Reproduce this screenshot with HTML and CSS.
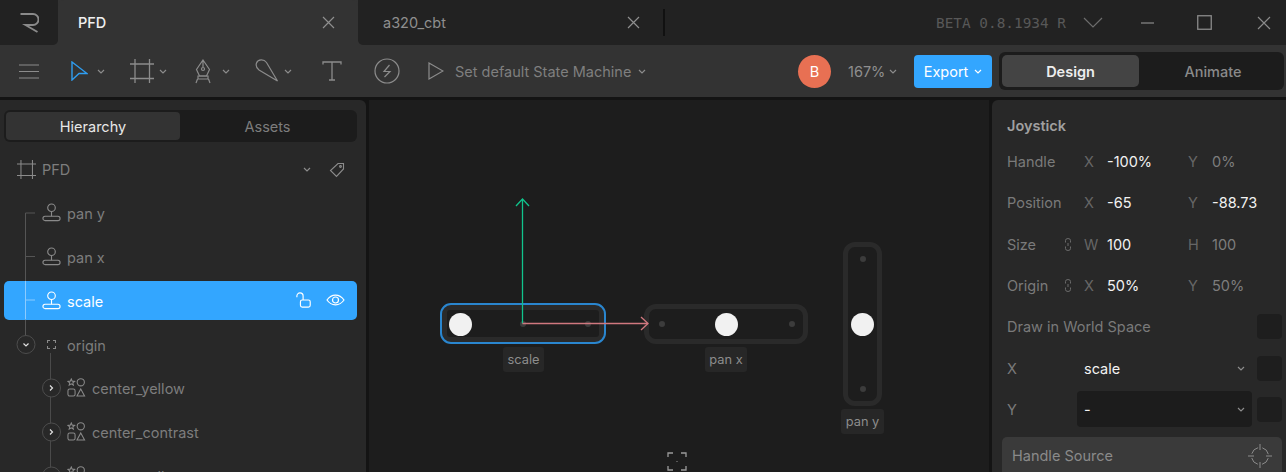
FILE: index.html
```html
<!DOCTYPE html>
<html>
<head>
  <title>PFD - Rive</title>
  <meta charset="UTF-8">
  <link rel="stylesheet" href="styles.css">
</head>
<body>
<svg class="defs" width="0" height="0">
  <symbol id="chev" viewBox="0 0 8 5"><path d="M1 1l3 3 3-3" fill="none" stroke="currentColor" stroke-width="1.2"/></symbol>
  <symbol id="frame" viewBox="0 0 24 24" fill="none" stroke="currentColor" stroke-width="1.3"><path d="M0 5h24M0 19.500h24M5 0v24M19.500 0v24"/></symbol>
  <symbol id="stick" viewBox="0 0 20 20" fill="none" stroke="currentColor" stroke-width="1.2"><circle cx="10" cy="5" r="4"/><path d="M10 9v5"/><rect x="1" y="14" width="18" height="4.500" rx="2.200"/></symbol>
  <symbol id="shapes" viewBox="0 0 20 20" fill="none" stroke="currentColor" stroke-width="1.1"><path d="M4.500 1l1 2.300 2.500.2-1.900 1.600.6 2.400-2.200-1.300-2.200 1.300.6-2.400L1 3.500l2.500-.2z"/><circle cx="14.500" cy="4.500" r="3.800"/><rect x="1" y="11.500" width="7.500" height="7.500" rx="1.800"/><path d="M14.500 11.500l4 7.500h-8z"/></symbol>
</svg>

<header class="titlebar">
  <div class="logo">
    <svg width="19" height="20" viewBox="0 0 19 20" fill="none" stroke="#8a8a8a" stroke-width="1.900"><path d="M.5 1h12.500a5.500 5.500 0 0 1 0 11H5.500l12 7"/></svg>
  </div>
  <div class="tab tab-active">
    <span>PFD</span>
    <svg class="tab-x" width="13" height="13" viewBox="0 0 13 13"><path d="M1 1l11 11M12 1L1 12" stroke="#8f8f8f" stroke-width="1.200"/></svg>
  </div>
  <div class="title-rest">
    <div class="tab">
      <span>a320_cbt</span>
      <svg class="tab-x" width="13" height="13" viewBox="0 0 13 13"><path d="M1 1l11 11M12 1L1 12" stroke="#8f8f8f" stroke-width="1.200"/></svg>
    </div>
    <div class="tab-sep"></div>
    <div class="version">BETA 0.8.1934 R</div>
    <svg class="ver-chev" width="20" height="12" viewBox="0 0 20 12"><path d="M1 1l9 9 9-9" fill="none" stroke="#6d6d6d" stroke-width="1.200"/></svg>
    <svg class="win-min" width="13" height="2" viewBox="0 0 13 2"><path d="M0 1h13" stroke="#8a8a8a" stroke-width="1.200"/></svg>
    <svg class="win-max" width="15" height="15" viewBox="0 0 15 15"><rect x=".75" y=".75" width="13.500" height="13.500" fill="none" stroke="#8a8a8a" stroke-width="1.300"/></svg>
    <svg class="win-close" width="14" height="14" viewBox="0 0 14 14"><path d="M1 1l12 12M13 1L1 13" stroke="#8a8a8a" stroke-width="1.200"/></svg>
  </div>
</header>

<div class="toolbar">
  <svg class="t-menu" width="20" height="15" viewBox="0 0 20 15"><path d="M0 1h20M0 7.500h20M0 14h20" stroke="#8c8c8c" stroke-width="1.200"/></svg>
  <svg class="t-arrow" width="17" height="20" viewBox="0 0 17 20"><path d="M1 1l15 11.500H8L1 19z" fill="none" stroke="#2f9df0" stroke-width="1.400"/></svg>
  <svg class="t-chev c1"><use href="#chev"/></svg>
  <svg class="t-crop" width="24" height="24" color="#8c8c8c"><use href="#frame"/></svg>
  <svg class="t-chev c2"><use href="#chev"/></svg>
  <svg class="t-pen" width="18" height="25" viewBox="0 0 18 25" fill="none" stroke="#8c8c8c" stroke-width="1.200"><path d="M9 1l6.500 9.500-3 6.500h-7l-3-6.500zM9 1v7"/><circle cx="9" cy="10" r="1.500"/><path d="M4 17h10v3H4zM3.500 20L2 24M14.500 20l1.500 4"/></svg>
  <svg class="t-chev c3"><use href="#chev"/></svg>
  <svg class="t-knife" width="24" height="24" viewBox="0 0 24 24" fill="none" stroke="#8c8c8c" stroke-width="1.200"><path d="M22.500 22L11.500 3.500C9 0 3 0 1.500 4 .5 7 2 9.500 4 11z"/></svg>
  <svg class="t-chev c4"><use href="#chev"/></svg>
  <svg class="t-text" width="20" height="20" viewBox="0 0 20 20" fill="none" stroke="#8c8c8c" stroke-width="1.300"><path d="M1 3.500V1h18v2.500M10 1v18M7 19h6"/></svg>
  <svg class="t-bolt" width="26" height="26" viewBox="0 0 26 26" fill="none" stroke="#8c8c8c" stroke-width="1.200"><circle cx="13" cy="13" r="12"/><path d="M15.500 7L10 13.500h6L10.500 19"/></svg>
  <svg class="t-play" width="16" height="18" viewBox="0 0 16 18"><path d="M1 1l14 8-14 8z" fill="none" stroke="#8c8c8c" stroke-width="1.200"/></svg>
  <span class="t-state">Set default State Machine</span>
  <svg class="t-chev c5"><use href="#chev"/></svg>
  <div class="avatar">B</div>
  <span class="t-zoom">167%</span>
  <svg class="t-chev c6"><use href="#chev"/></svg>
  <div class="export">Export <svg class="t-chev c7"><use href="#chev"/></svg></div>
  <div class="mode">
    <div class="mode-btn mode-on">Design</div>
    <div class="mode-btn">Animate</div>
  </div>
</div>

<main class="workspace">
  <aside class="left">
    <div class="seg">
      <div class="seg-btn seg-on">Hierarchy</div>
      <div class="seg-btn">Assets</div>
    </div>
    <div class="artboard">
      <svg class="ab-icon" width="19" height="19" color="#8c8c8c"><use href="#frame"/></svg>
      <span>PFD</span>
      <svg class="ab-chev t-chev"><use href="#chev"/></svg>
      <svg class="ab-tag" width="16" height="16" viewBox="0 0 16 16" fill="none" stroke="#8c8c8c" stroke-width="1.100"><path d="M9 1.500h5.500V7L7.500 14.500 1.500 8.500z"/><circle cx="11.500" cy="4.500" r=".9"/></svg>
    </div>
    <div class="tree">
      <div class="row d1"><svg class="r-icon" color="#8a8a8a"><use href="#stick"/></svg><span>pan y</span></div>
      <div class="row d1"><svg class="r-icon" color="#8a8a8a"><use href="#stick"/></svg><span>pan x</span></div>
      <div class="row d1 row-sel">
        <svg class="r-icon" color="#fff"><use href="#stick"/></svg><span>scale</span>
        <svg class="lock" width="16" height="16" viewBox="0 0 18 18" fill="none" stroke="#fff" stroke-width="1.300"><path d="M1 6V4.500a3.500 3.500 0 0 1 7 0V9"/><rect x="5" y="9" width="11" height="8" rx="2"/></svg>
        <svg class="eye" width="19" height="12" viewBox="0 0 19 12" fill="none" stroke="#fff" stroke-width="1.200"><path d="M1 6c4.500-6.500 12.500-6.500 17 0-4.500 6.500-12.500 6.500-17 0z"/><circle cx="9.500" cy="6" r="3"/></svg>
      </div>
      <div class="row d1">
        <svg class="r-target" width="9" height="9" viewBox="0 0 9 9" fill="none" stroke="#8a8a8a" stroke-width="1.100"><path d="M.5 3V.5H3M6 .5h2.500V3M8.500 6v2.500H6M3 8.500H.5V6"/></svg><span>origin</span>
      </div>
      <div class="row d2"><svg class="r-icon" color="#8a8a8a"><use href="#shapes"/></svg><span>center_yellow</span></div>
      <div class="row d2"><svg class="r-icon" color="#8a8a8a"><use href="#shapes"/></svg><span>center_contrast</span></div>
      <div class="row d2"><svg class="r-icon" color="#8a8a8a"><use href="#shapes"/></svg><span>center_yellow</span></div>
      <svg class="guides" width="120" height="340" viewBox="0 0 120 340" fill="none" stroke-width="1">
        <path d="M25.500 63V131M25.500 169.500V186M25.500 63H35M25.500 106.500H35" stroke="#555"/>
        <path d="M25.500 131V169.500M25.500 150H35" stroke="#8ccbff"/>
        <path d="M50.500 203V330" stroke="#4a4a4a"/>
        <g fill="#282828" stroke="#4d4d4d"><circle cx="26" cy="194.500" r="9"/><circle cx="51.500" cy="238" r="9"/><circle cx="51.500" cy="282" r="9"/><circle cx="51.500" cy="326" r="9"/></g>
        <g stroke="#e0e0e0" stroke-width="1.200"><path d="M23.500 193.500l2.500 2.500 2.500-2.500M50 235.500l2.500 2.500-2.500 2.500M50 279.500l2.500 2.500-2.500 2.500M50 323.500l2.500 2.500-2.500 2.500"/></g>
      </svg>
    </div>
  </aside>

  <section class="stage">
    <div class="stick-box scale-box"><i class="dot dot-a"></i><i class="dot dot-b"></i><b class="knob"></b></div>
    <div class="selection"></div>
    <div class="tag tag-scale">scale</div>

    <div class="stick-box panx-box"><i class="dot dot-a"></i><i class="dot dot-b"></i><b class="knob"></b></div>
    <div class="tag tag-panx">pan x</div>

    <div class="stick-box pany-box"><i class="dot dot-a"></i><i class="dot dot-b"></i><b class="knob"></b></div>
    <div class="tag tag-pany">pan y</div>

    <svg class="axes" width="290" height="240" viewBox="0 0 290 240" fill="none" stroke-width="1.300">
      <path d="M153.500 100V223.500" stroke="#10c48c"/>
      <path d="M147 106l6.500-7 6.500 7" stroke="#10c48c"/>
      <path d="M153.500 223.500H279" stroke="#d0787f"/>
      <path d="M272 217l7 6.500-7 6.500" stroke="#d0787f"/>
    </svg>
    <svg class="focus" width="20" height="19" viewBox="0 0 20 19" fill="none" stroke="#9a9a9a" stroke-width="1.300"><path d="M1 5V1h5M14 1h5v4M19 14v4h-5M6 18H1v-4"/><path d="M10 9v1" stroke="#777"/></svg>
  </section>

  <aside class="right">
    <h3 class="insp-title">Joystick</h3>
    <div class="insp">
      <div class="prop"><span class="p-label">Handle</span><span class="p-axis">X</span><span class="p-val on">-100%</span><span class="p-axis">Y</span><span class="p-val">0%</span></div>
      <div class="prop"><span class="p-label">Position</span><span class="p-axis">X</span><span class="p-val on">-65</span><span class="p-axis">Y</span><span class="p-val on">-88.73</span></div>
      <div class="prop">
        <span class="p-label">Size<svg class="link" width="6" height="13" viewBox="0 0 6 13" fill="none" stroke="#6a6a6a" stroke-width="1"><path d="M.5 4.500V2.500a2.500 2 0 0 1 5 0v2M.5 8.500v2a2.500 2 0 0 0 5 0v-2M3 5v3"/></svg></span>
        <span class="p-axis">W</span><span class="p-val on">100</span><span class="p-axis">H</span><span class="p-val">100</span>
      </div>
      <div class="prop">
        <span class="p-label">Origin<svg class="link" width="6" height="13" viewBox="0 0 6 13" fill="none" stroke="#6a6a6a" stroke-width="1"><path d="M.5 4.500V2.500a2.500 2 0 0 1 5 0v2M.5 8.500v2a2.500 2 0 0 0 5 0v-2M3 5v3"/></svg></span>
        <span class="p-axis">X</span><span class="p-val on">50%</span><span class="p-axis">Y</span><span class="p-val">50%</span>
      </div>
      <div class="prop-wide"><span class="p-label">Draw in World Space</span><div class="key"></div></div>
      <div class="prop-wide"><span class="p-label p-short">X</span><div class="select"><span>scale</span><svg class="t-chev"><use href="#chev"/></svg></div><div class="key"></div></div>
      <div class="prop-wide"><span class="p-label p-short">Y</span><div class="select select-on"><span>-</span><svg class="t-chev"><use href="#chev"/></svg></div><div class="key"></div></div>
    </div>
    <div class="source">
      <span>Handle Source</span>
      <svg width="24" height="24" viewBox="0 0 24 24" fill="none" stroke="#8c8c8c" stroke-width="1"><circle cx="12" cy="12" r="8.500" stroke-dasharray="9 4.350" stroke-dashoffset="11.200"/><path d="M12 0v6M12 18v6M0 12h6M18 12h6"/></svg>
    </div>
  </aside>
</main>
</body>
</html>
```

FILE: styles.css
```css
* { box-sizing: border-box; }
html, body { height: 100%; }
body {
  margin: 0; height: 472px; overflow: hidden;
  font-family: Inter, "Liberation Sans", sans-serif; font-size: 14.500px;
  background: #141414; color: #8a8a8a;
  display: flex; flex-direction: column;
}
.defs { position: absolute; }
svg { display: block; flex: none; }

/* title bar */
.titlebar { height: 45px; display: flex; background: #333; flex: none; }
.logo { width: 58px; background: #222; border-bottom-right-radius: 5px; padding: 13px 0 0 20px; }
.tab { width: 300px; display: flex; align-items: center; padding-left: 25px; color: #8f8f8f; }
.tab-active { background: #333; color: #f0f0f0; padding-left: 20px; border-radius: 6px 6px 0 0; font-weight: 500; }
.tab-x { margin-left: auto; margin-right: 23px; }
.title-rest { flex: 1; display: flex; align-items: center; background: #222; border-bottom-left-radius: 5px; }
.title-rest .tab { width: 297px; height: 100%; }
.title-rest .tab-x { margin-right: 15px; }
.tab-sep { width: 2px; height: 27px; background: #111; margin-left: 8px; }
.version { margin-left: 271px; font-family: "DejaVu Sans Mono", monospace; font-size: 14.400px; color: #585858; white-space: nowrap; }
.ver-chev { margin-left: 17px; }
.win-min { margin-left: 38px; }
.win-max { margin-left: 43px; }
.win-close { margin-left: 45px; }

/* toolbar */
.toolbar { height: 52px; flex: none; background: #333; display: flex; align-items: center; padding-left: 19px; position: relative; }
.t-chev { width: 8px; height: 5px; color: #8c8c8c; }
.t-arrow { margin-left: 32px; }
.c1 { margin-left: 9px; }
.t-crop { margin-left: 25px; }
.c2 { margin-left: 5px; }
.t-pen { margin-left: 27px; }
.c3 { margin-left: 10px; }
.t-knife { margin-left: 25px; }
.c4 { margin-left: 5px; }
.t-text { margin-left: 30px; }
.t-bolt { margin-left: 32px; }
.t-play { margin-left: 28px; }
.t-state { margin-left: 11px; color: #7f7f7f; white-space: nowrap; width: 178px; }
.c5 { margin-left: 5px; }
.avatar { width: 33px; height: 33px; border-radius: 50%; background: #e87053; color: #fff; display: flex; align-items: center; justify-content: center; margin-left: 152px; }
.t-zoom { margin-left: 17px; width: 37px; color: #8f8f8f; }
.c6 { margin-left: 4px; }
.export { width: 78px; height: 33px; margin-left: 17px; background: #33a6ff; color: #fff; border-radius: 4px; display: flex; align-items: center; justify-content: center; gap: 6px; }
.c7 { color: #fff; }
.mode { width: 285px; height: 38px; margin-left: 7px; background: #1c1c1c; border-radius: 6px; padding: 3px; display: flex; }
.mode-btn { flex: 1; display: flex; align-items: center; justify-content: center; font-weight: 500; color: #8a8a8a; border-radius: 5px; padding-left: 6px; }
.mode-btn:first-child { flex: none; width: 137px; padding-left: 0; }
.mode-on { background: #444; color: #eee; font-weight: 600; }

/* panels */
.workspace { flex: 1; min-height: 0; display: flex; margin-top: 3px; gap: 3px; }
.left { width: 366px; background: #282828; border-top-right-radius: 6px; padding: 10px 9px 0 4px; flex: none; }
.stage { flex: none; width: 620px; background: #1d1d1d; position: relative; overflow: hidden; }
.right { flex: 1; background: #282828; border-top-left-radius: 6px; padding: 17px 4px 0 10px; overflow: hidden; }

/* left panel */
.seg { height: 32px; background: #1c1c1c; border-radius: 6px; padding: 2px; display: flex; }
.seg-btn { flex: 1; display: flex; align-items: center; justify-content: center; color: #7d7d7d; border-radius: 4px; }
.seg-on { flex: none; width: 174px; background: #333; color: #e8e8e8; }
.artboard { height: 39px; margin-top: 8px; display: flex; align-items: center; padding-left: 13px; color: #7d7d7d; }
.artboard span { margin-left: 6px; }
.ab-chev { margin-left: auto; }
.ab-tag { margin: 0 12px 0 18px; }
.tree { display: flex; flex-direction: column; gap: 5px; margin-top: 4.600px; position: relative; }
.row { height: 38.700px; flex: none; display: flex; align-items: center; border-radius: 5px; color: #7d7d7d; }
.row span { padding-top: 2px; }
.d1 { padding-left: 38px; }
.d2 { padding-left: 63px; }
.r-icon { width: 19px; height: 19px; margin-right: 6px; }
.r-target { margin: 0 11px 0 5px; }
.row-sel { background: #33a6ff; color: #fff; }
.lock { margin-left: auto; }
.eye { margin: 0 12px 0 14px; }
.guides { position: absolute; left: -4px; top: -43.600px; pointer-events: none; }

/* canvas */
.stick-box, .selection, .tag, .axes, .focus { position: absolute; }
.stick-box { border: 5px solid #2a2a2a; border-radius: 12px; }
.selection { left: 71px; top: 203px; width: 166px; height: 41px; border: 2px solid #2a86cf; border-radius: 11px; }
.knob { position: absolute; width: 23px; height: 23px; border-radius: 50%; background: #f1f1f1; }
.dot { position: absolute; width: 6px; height: 6px; border-radius: 50%; background: #3c3c3c; }

.scale-box { left: 73px; top: 205px; width: 162px; height: 37px; border-radius: 8px; }
.scale-box .knob { left: 2px; top: 2.500px; }
.scale-box .dot { top: 11px; }
.scale-box .dot-a { left: 73px; }
.scale-box .dot-b { left: 138px; }

.panx-box { left: 275px; top: 204px; width: 164px; height: 40px; }
.panx-box .knob { left: 66px; top: 3.500px; }
.panx-box .dot { top: 12px; }
.panx-box .dot-a { left: 9.500px; }
.panx-box .dot-b { left: 139.500px; }

.pany-box { left: 473.500px; top: 141.500px; width: 39.500px; height: 164px; }
.pany-box .knob { left: 3.500px; top: 66px; }
.pany-box .dot { left: 12px; }
.pany-box .dot-a { top: 9.500px; }
.pany-box .dot-b { top: 139.500px; }

.tag { height: 25px; background: #272727; border-radius: 3px; font-size: 12.800px; line-height: 25px; color: #8d8d8d; text-align: center; }
.tag-scale { left: 134px; top: 247px; width: 41px; }
.tag-panx { left: 336px; top: 247px; width: 42px; }
.tag-pany { left: 472px; top: 309px; width: 43px; }
.axes { left: 0; top: 0; overflow: visible; }
.focus { left: 298px; top: 352px; }

/* inspector */
.insp-title { margin: 0 0 0 5px; font-size: 14.500px; font-weight: 600; color: #a0a0a0; line-height: 18px; }
.insp { margin-top: 6px; }
.prop { height: 41.300px; display: grid; grid-template-columns: 77px 23px 81px 24px 1fr; align-items: center; padding-left: 5px; }
.p-label { color: #7a7a7a; display: flex; align-items: center; justify-content: space-between; padding-right: 14px; white-space: nowrap; }
.p-axis { color: #666; }
.p-val { color: #7d7d7d; }
.on { color: #f2f2f2; }
.link { margin-right: -1px; }
.prop-wide { height: 41.300px; display: flex; align-items: center; padding-left: 5px; }
.p-short { width: 70px; padding: 0; }
.select { width: 175px; height: 36px; display: flex; align-items: center; justify-content: space-between; padding: 0 7px; border-radius: 4px; color: #f2f2f2; }
.select-on { background: #1c1c1c; }
.key { width: 25px; height: 25px; margin-left: auto; background: #1e1e1e; border-radius: 4px; }
.select + .key { margin-left: 5px; }
.source { height: 37px; margin-top: 7px; background: #3a3a3a; border-radius: 5px 5px 0 0; display: flex; align-items: center; justify-content: space-between; padding: 0 10px; color: #8a8a8a; }
```
